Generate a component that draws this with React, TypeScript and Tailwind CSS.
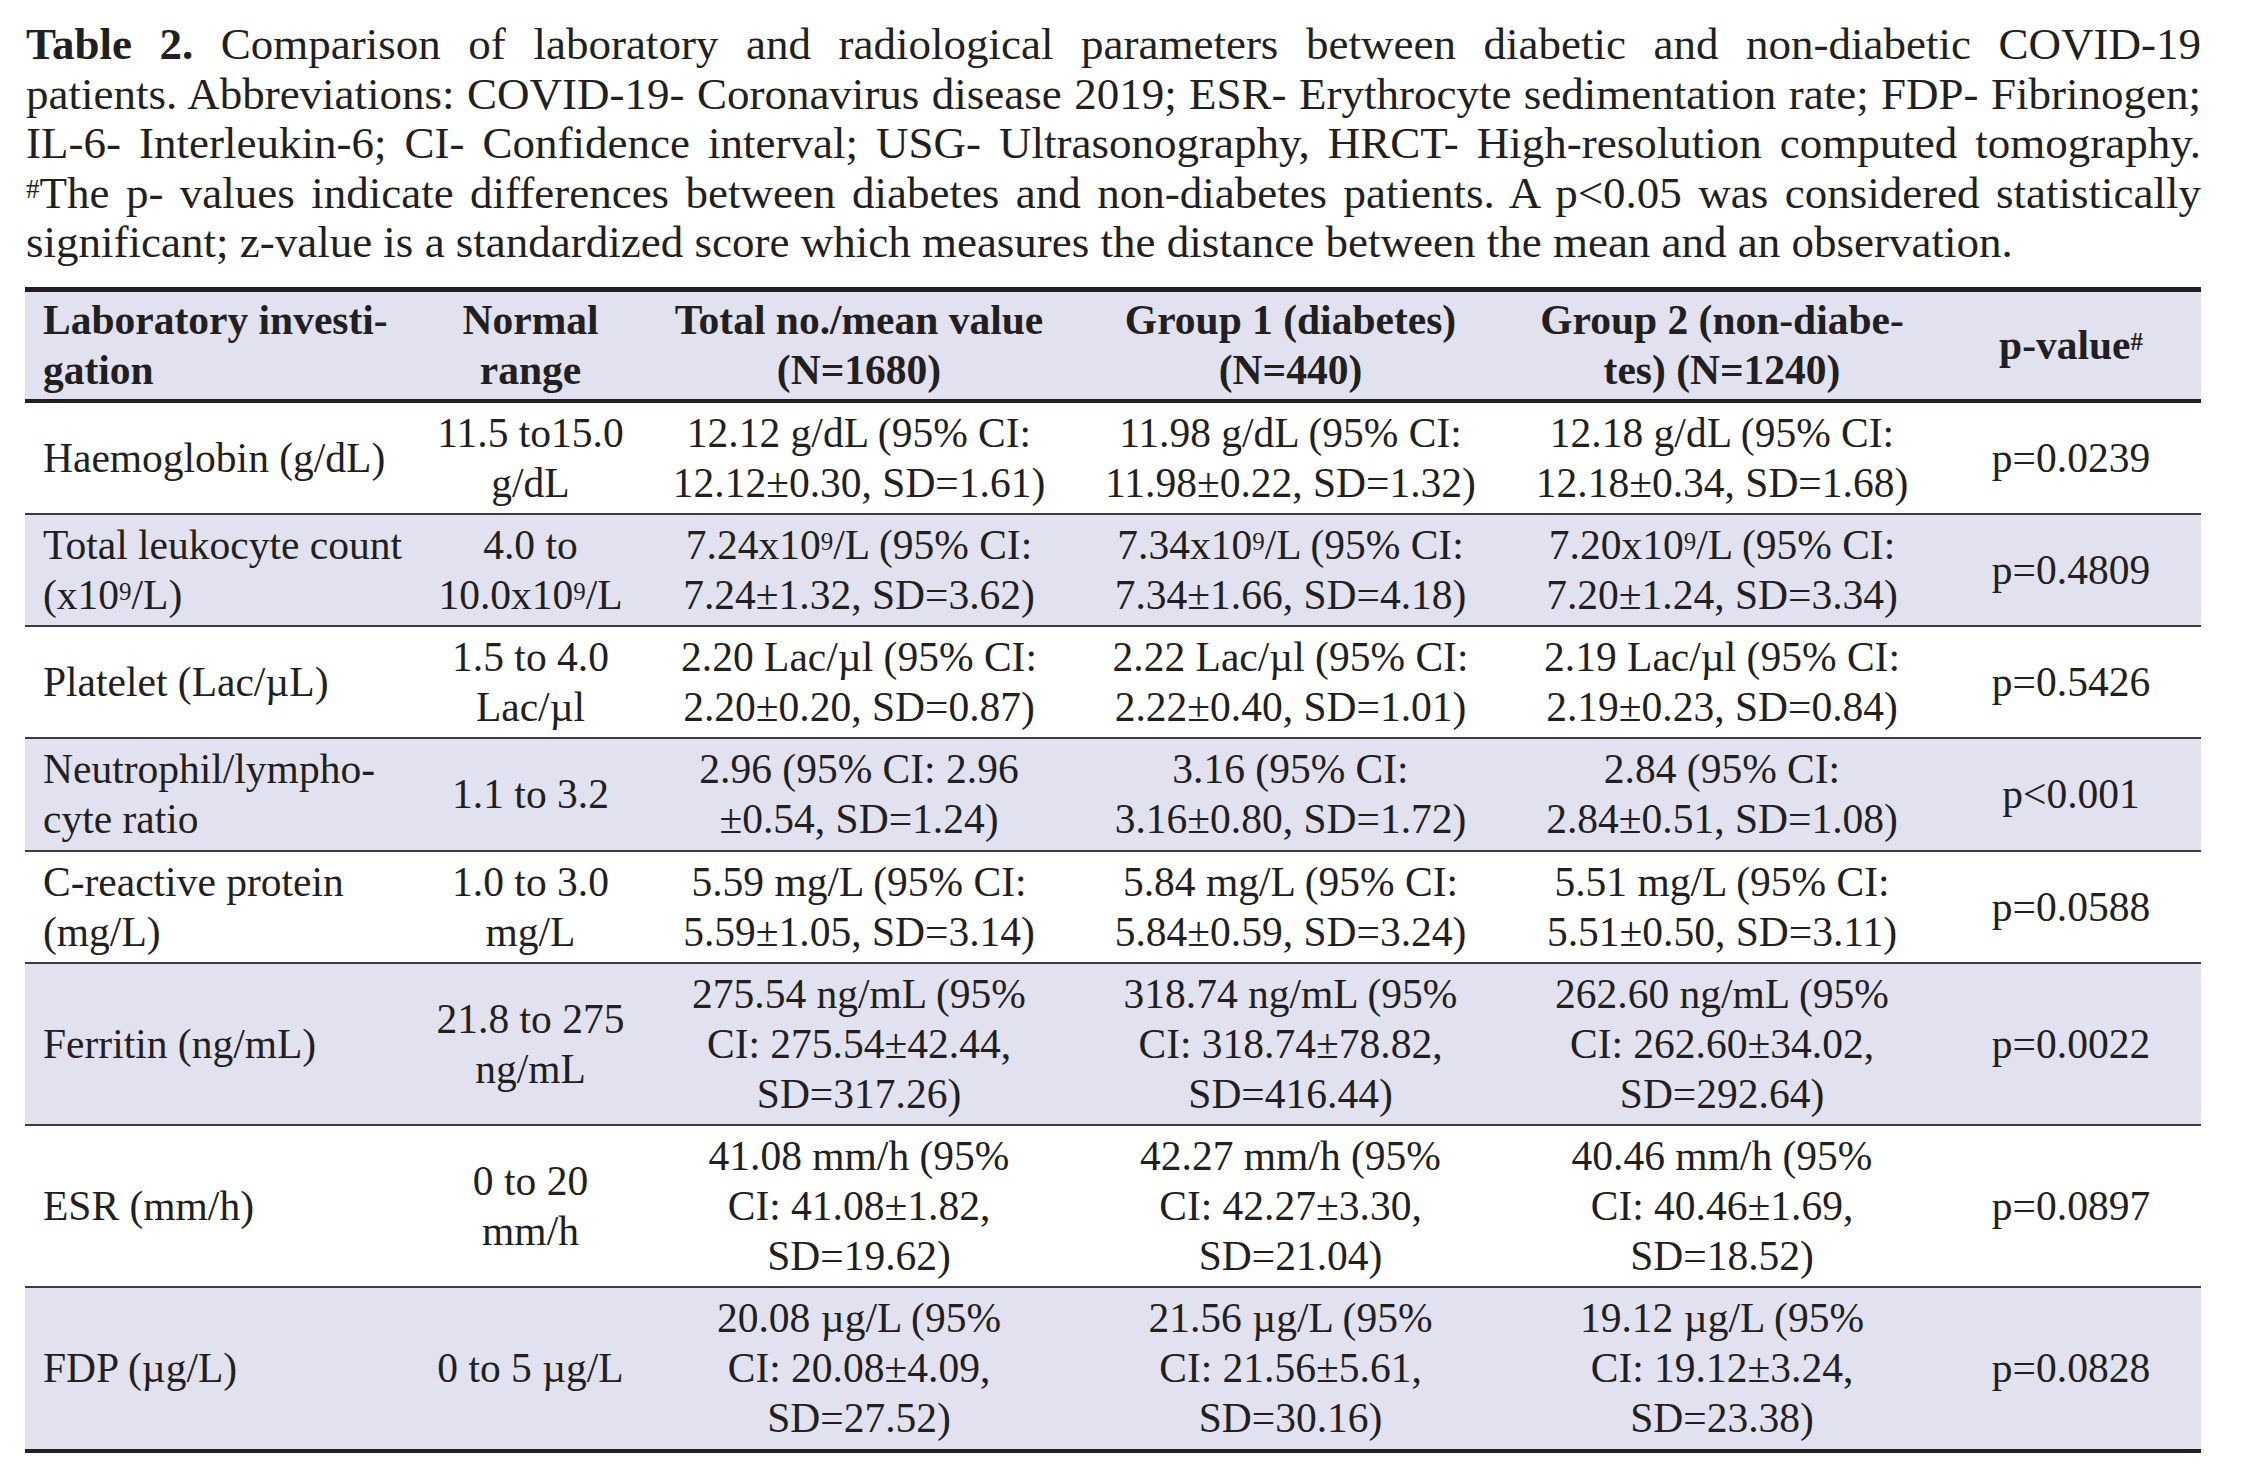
import React from 'react';

type Cell = React.ReactNode[];

interface Row {
  name: Cell;
  range: Cell;
  total: Cell;
  g1: Cell;
  g2: Cell;
  p: string;
}

const Sup = ({ children }: { children: React.ReactNode }) => (
  <sup className="text-[0.6em] relative -top-[0.35em] align-baseline">{children}</sup>
);

const x9 = (v: string) => (
  <>
    {v}x10<Sup>9</Sup>/L
  </>
);

const rows: Row[] = [
  {
    name: ['Haemoglobin (g/dL)'],
    range: ['11.5 to15.0', 'g/dL'],
    total: ['12.12 g/dL (95% CI:', '12.12±0.30, SD=1.61)'],
    g1: ['11.98 g/dL (95% CI:', '11.98±0.22, SD=1.32)'],
    g2: ['12.18 g/dL (95% CI:', '12.18±0.34, SD=1.68)'],
    p: 'p=0.0239',
  },
  {
    name: ['Total leukocyte count', <>(x10<Sup>9</Sup>/L)</>],
    range: ['4.0 to', x9('10.0')],
    total: [<>{x9('7.24')} (95% CI:</>, '7.24±1.32, SD=3.62)'],
    g1: [<>{x9('7.34')} (95% CI:</>, '7.34±1.66, SD=4.18)'],
    g2: [<>{x9('7.20')} (95% CI:</>, '7.20±1.24, SD=3.34)'],
    p: 'p=0.4809',
  },
  {
    name: ['Platelet (Lac/µL)'],
    range: ['1.5 to 4.0', 'Lac/µl'],
    total: ['2.20 Lac/µl (95% CI:', '2.20±0.20, SD=0.87)'],
    g1: ['2.22 Lac/µl (95% CI:', '2.22±0.40, SD=1.01)'],
    g2: ['2.19 Lac/µl (95% CI:', '2.19±0.23, SD=0.84)'],
    p: 'p=0.5426',
  },
  {
    name: ['Neutrophil/lympho-', 'cyte ratio'],
    range: ['1.1 to 3.2'],
    total: ['2.96 (95% CI: 2.96', '±0.54, SD=1.24)'],
    g1: ['3.16 (95% CI:', '3.16±0.80, SD=1.72)'],
    g2: ['2.84 (95% CI:', '2.84±0.51, SD=1.08)'],
    p: 'p<0.001',
  },
  {
    name: ['C-reactive protein', '(mg/L)'],
    range: ['1.0 to 3.0', 'mg/L'],
    total: ['5.59 mg/L (95% CI:', '5.59±1.05, SD=3.14)'],
    g1: ['5.84 mg/L (95% CI:', '5.84±0.59, SD=3.24)'],
    g2: ['5.51 mg/L (95% CI:', '5.51±0.50, SD=3.11)'],
    p: 'p=0.0588',
  },
  {
    name: ['Ferritin (ng/mL)'],
    range: ['21.8 to 275', 'ng/mL'],
    total: ['275.54 ng/mL (95%', 'CI: 275.54±42.44,', 'SD=317.26)'],
    g1: ['318.74 ng/mL (95%', 'CI: 318.74±78.82,', 'SD=416.44)'],
    g2: ['262.60 ng/mL (95%', 'CI: 262.60±34.02,', 'SD=292.64)'],
    p: 'p=0.0022',
  },
  {
    name: ['ESR (mm/h)'],
    range: ['0 to 20', 'mm/h'],
    total: ['41.08 mm/h (95%', 'CI: 41.08±1.82,', 'SD=19.62)'],
    g1: ['42.27 mm/h (95%', 'CI: 42.27±3.30,', 'SD=21.04)'],
    g2: ['40.46 mm/h (95%', 'CI: 40.46±1.69,', 'SD=18.52)'],
    p: 'p=0.0897',
  },
  {
    name: ['FDP (µg/L)'],
    range: ['0 to 5 µg/L'],
    total: ['20.08 µg/L (95%', 'CI: 20.08±4.09,', 'SD=27.52)'],
    g1: ['21.56 µg/L (95%', 'CI: 21.56±5.61,', 'SD=30.16)'],
    g2: ['19.12 µg/L (95%', 'CI: 19.12±3.24,', 'SD=23.38)'],
    p: 'p=0.0828',
  },
];

const Lines = ({ lines }: { lines: Cell }) => (
  <>
    {lines.map((l, i) => (
      <div key={i} className="whitespace-nowrap">{l}</div>
    ))}
  </>
);

// justified caption line, last one left as-is
const CapLine = ({ children, last }: { children: React.ReactNode; last?: boolean }) => (
  <div className={last ? 'text-left' : 'text-justify [text-align-last:justify]'}>{children}</div>
);

export default function App() {
  return (
    <div className="w-[2255px] min-h-[1475px] bg-white text-[#231f20] [font-family:'Liberation_Serif',serif] pt-[20px] pl-[25px] pr-[54px]">
      <div className="text-[45px] leading-[49.5px] pl-[1px]">
        <CapLine>
          <b>Table 2.</b> Comparison of laboratory and radiological parameters between diabetic and non-diabetic COVID-19
        </CapLine>
        <CapLine>
          patients. Abbreviations: COVID-19- Coronavirus disease 2019; ESR- Erythrocyte sedimentation rate; FDP- Fibrinogen;
        </CapLine>
        <CapLine>
          IL-6- Interleukin-6; CI- Confidence interval; USG- Ultrasonography, HRCT- High-resolution computed tomography.
        </CapLine>
        <CapLine>
          <Sup>#</Sup>The p- values indicate differences between diabetes and non-diabetes patients. A p&lt;0.05 was considered statistically
        </CapLine>
        <CapLine last>
          significant; z-value is a standardized score which measures the distance between the mean and an observation.
        </CapLine>
      </div>

      <table className="mt-[19px] w-[2176px] table-fixed border-collapse text-[41.5px] leading-[50px]">
        <colgroup>
          <col className="w-[396px]" />
          <col className="w-[219px]" />
          <col className="w-[438px]" />
          <col className="w-[425px]" />
          <col className="w-[438px]" />
          <col className="w-[260px]" />
        </colgroup>
        <thead>
          <tr className="bg-[#e1e1ef] border-t-[5px] border-b-[4px] border-[#231f20] font-bold">
            <th className="text-left align-middle pl-[18px] py-[3.5px] font-bold">
              <div>Laboratory investi-</div>
              <div>gation</div>
            </th>
            <th className="text-center align-middle py-[3.5px]">
              <div>Normal</div>
              <div>range</div>
            </th>
            <th className="text-center align-middle py-[3.5px]">
              <div>Total no./mean value</div>
              <div>(N=1680)</div>
            </th>
            <th className="text-center align-middle py-[3.5px]">
              <div>Group 1 (diabetes)</div>
              <div>(N=440)</div>
            </th>
            <th className="text-center align-middle py-[3.5px]">
              <div>Group 2 (non-diabe-</div>
              <div>tes) (N=1240)</div>
            </th>
            <th className="text-center align-middle py-[3.5px]">
              p-value<Sup>#</Sup>
            </th>
          </tr>
        </thead>
        <tbody>
          {rows.map((r, i) => (
            <tr
              key={i}
              className={`${i % 2 === 1 ? 'bg-[#e1e1ef]' : 'bg-white'} ${i > 0 ? 'border-t-2 border-[#3d3d3d]' : ''} ${i === rows.length - 1 ? 'border-b-[4px] border-b-[#231f20]' : ''}`}
            >
              <td className="text-left align-middle pl-[18px] py-[5.125px]">
                <Lines lines={r.name} />
              </td>
              <td className="text-center align-middle py-[5.125px]">
                <Lines lines={r.range} />
              </td>
              <td className="text-center align-middle py-[5.125px]">
                <Lines lines={r.total} />
              </td>
              <td className="text-center align-middle py-[5.125px]">
                <Lines lines={r.g1} />
              </td>
              <td className="text-center align-middle py-[5.125px]">
                <Lines lines={r.g2} />
              </td>
              <td className="text-center align-middle py-[5.125px]">{r.p}</td>
            </tr>
          ))}
        </tbody>
      </table>
    </div>
  );
}
